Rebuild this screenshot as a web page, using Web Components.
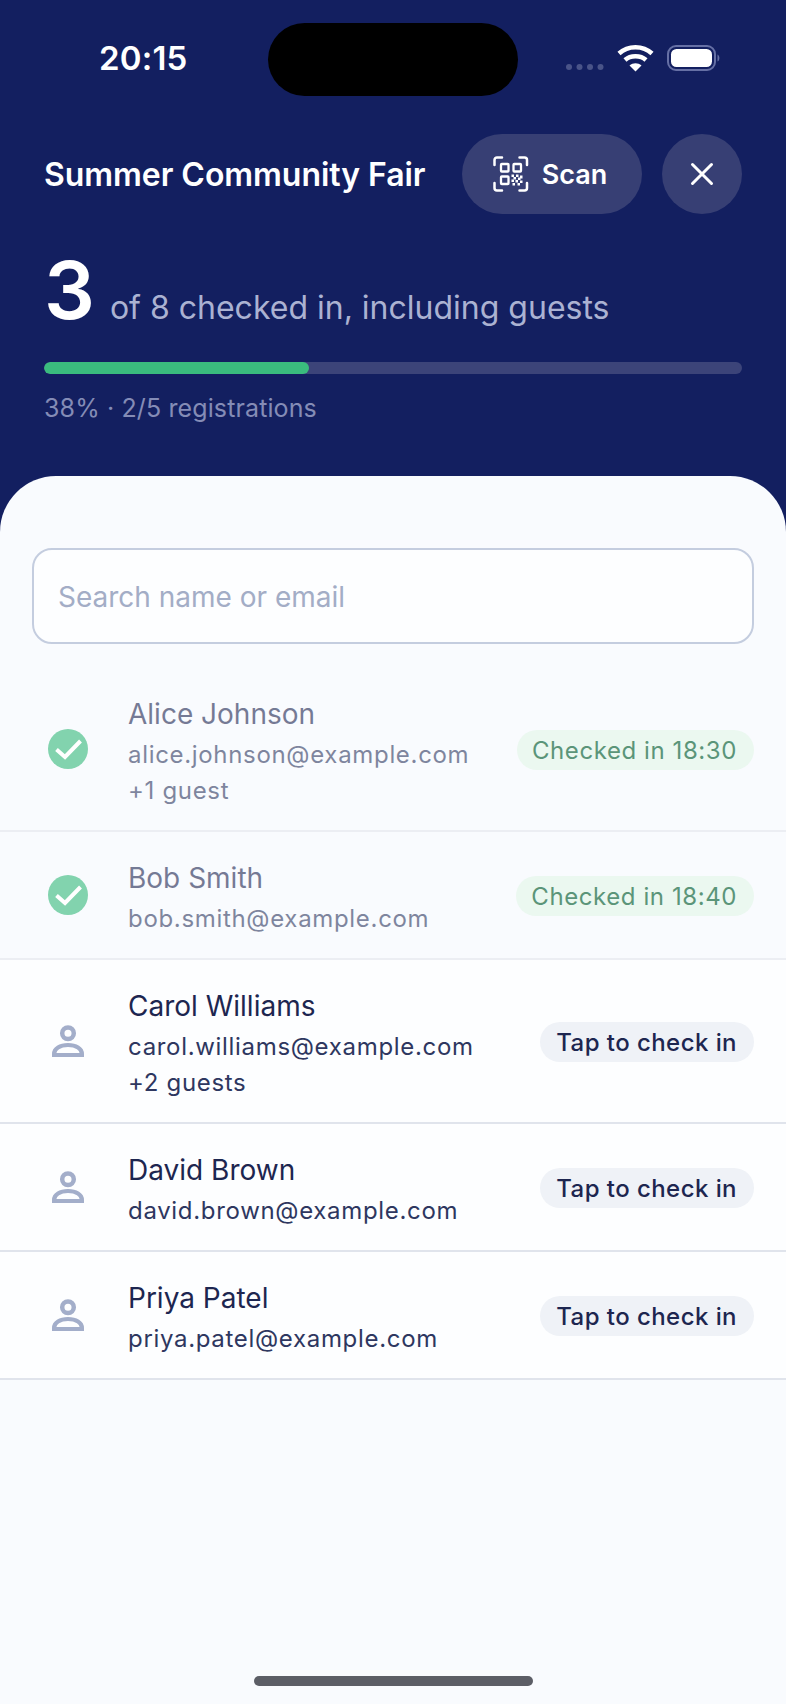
<!DOCTYPE html>
<html lang="en">
<head>
<meta charset="utf-8">
<title>Summer Community Fair</title>
<style>
  html, body { margin: 0; height: 100%; background: #131f60; }
  body { font-family: Inter, "Liberation Sans", sans-serif; }
  fair-screen { height: 1704px; }
</style>
</head>
<body>
<fair-screen>
  <status-bar slot="top" time="20:15"></status-bar>
  <fair-header slot="top" title="Summer Community Fair" count="3" total="of 8 checked in, including guests" percent="38" note="38% · 2/5 registrations"></fair-header>
  <search-box placeholder="Search name or email"></search-box>
  <guest-row name="Alice Johnson" email="alice.johnson@example.com" extra="+1 guest" checked="18:30"></guest-row>
  <guest-row name="Bob Smith" email="bob.smith@example.com" checked="18:40"></guest-row>
  <guest-row name="Carol Williams" email="carol.williams@example.com" extra="+2 guests"></guest-row>
  <guest-row name="David Brown" email="david.brown@example.com"></guest-row>
  <guest-row name="Priya Patel" email="priya.patel@example.com"></guest-row>
</fair-screen>

<script>
class FairScreen extends HTMLElement {
  constructor() {
    super();
    this.attachShadow({ mode: "open" });
  }

  connectedCallback() {
    this.shadowRoot.innerHTML = /* html */`
    <style>
      :host { display: flex; flex-direction: column; background: #131f60; overflow: hidden; position: relative; }
      .sheet {
        flex: 1;
        background: #f9fbfe;
        border-radius: 56px 56px 0 0;
        padding-top: 72px;
      }
      .home {
        position: absolute;
        left: 254px;
        bottom: 18px;
        width: 279px;
        height: 10px;
        border-radius: 5px;
        background: #5c5e66;
      }
    </style>
    <slot name="top"></slot>
    <div class="sheet"><slot></slot></div>
    <div class="home"></div>
    `;
  }
}

class StatusBar extends HTMLElement {
  constructor() {
    super();
    this.attachShadow({ mode: "open" });
  }

  connectedCallback() {
    this.shadowRoot.innerHTML = /* html */`
    <style>
      :host { display: flex; align-items: flex-start; height: 134px; position: relative; color: #fff; }
      .time {
        margin: 36px 0 0 99px;
        font: 600 33px/44px Inter, "Liberation Sans", sans-serif;
        letter-spacing: 0.2px;
      }
      .island {
        position: absolute;
        left: 268px;
        top: 23px;
        width: 250px;
        height: 73px;
        border-radius: 37px;
        background: #000;
      }
      .icons { position: absolute; left: 564px; top: 44px; }
    </style>
    <span class="time">${this.getAttribute("time")}</span>
    <div class="island"></div>
    <svg class="icons" width="160" height="32" viewBox="0 0 160 32">
      <g fill="#4a5488">
        <circle cx="5" cy="23" r="3"/><circle cx="15.500" cy="23" r="3"/>
        <circle cx="26" cy="23" r="3"/><circle cx="36.500" cy="23" r="3"/>
      </g>
      <g fill="none" stroke="#fff" stroke-width="4.500">
        <path d="M55 9.500C64 1 79 1 88 9.500"/>
        <path d="M61 16C66.500 11 76.500 11 82 16"/>
      </g>
      <path d="M65.500 21.500C69 18.500 74 18.500 77.500 21.500L71.500 27.500Z" fill="#fff"/>
      <rect x="104" y="2" width="47" height="24" rx="8" fill="none" stroke="#6670a5" stroke-width="2"/>
      <rect x="107" y="5" width="41" height="18" rx="5.500" fill="#fff"/>
      <path d="M153.500 10.500C156 11.500 156 16.500 153.500 17.500Z" fill="#6670a5"/>
    </svg>
    `;
  }
}

class FairHeader extends HTMLElement {
  constructor() {
    super();
    this.attachShadow({ mode: "open" });
  }

  connectedCallback() {
    const percent = this.getAttribute("percent");
    this.shadowRoot.innerHTML = /* html */`
    <style>
      :host { display: block; height: 342px; padding: 0 44px; color: #fff; box-sizing: border-box; }
      .top { display: flex; align-items: center; height: 80px; }
      h1 { flex: 1; margin: 0; font-size: 32px; font-weight: 600; letter-spacing: -0.05px; white-space: nowrap; }
      .btn {
        display: flex;
        align-items: center;
        justify-content: center;
        height: 80px;
        border-radius: 40px;
        background: #373f74;
      }
      .scan { box-sizing: border-box; width: 180px; padding-right: 4px; gap: 13px; font-size: 27px; font-weight: 600; margin-right: 20px; }
      .close { width: 80px; }
      .stat { display: flex; align-items: baseline; margin-top: 34px; height: 84px; }
      .count { font-size: 80px; font-weight: 600; line-height: 84px; margin-right: 15px; }
      .total { font-size: 32px; color: #abb2d2; }
      .bar { height: 12px; margin-top: 30px; border-radius: 6px; background: #3c4479; overflow: hidden; }
      .fill { height: 100%; width: ${percent}%; border-radius: 6px; background: #3abc7e; }
      .note { margin-top: 18px; font-size: 25px; line-height: 32px; color: #848cb6; letter-spacing: 0.12px; }
    </style>
    <div class="top">
      <h1>${this.getAttribute("title")}</h1>
      <div class="btn scan">
        <svg width="36" height="36" viewBox="0 0 36 36" fill="none" stroke="#fff" stroke-width="2.500" stroke-linecap="round" stroke-linejoin="round">
          <path d="M1.500 9V4a2.500 2.500 0 0 1 2.500-2.500h5M26.500 1.500h5A2.500 2.500 0 0 1 34 4v5M34 27v5a2.500 2.500 0 0 1-2.500 2.500h-5M9 34.500H4A2.500 2.500 0 0 1 1.500 32v-5"/>
          <g stroke-width="2.300">
            <rect x="8" y="8" width="7.500" height="7.500" rx="0.800"/>
            <rect x="20.500" y="8" width="7.500" height="7.500" rx="0.800"/>
            <rect x="8" y="20.500" width="7.500" height="7.500" rx="0.800"/>
          </g>
          <g fill="#fff" stroke="none">
            <rect x="18.500" y="18.500" width="2.500" height="2.500"/>
            <rect x="23" y="18.500" width="2.500" height="2.500"/>
            <rect x="27" y="19.500" width="2.500" height="3"/>
            <rect x="20.500" y="21" width="2.500" height="2.500"/>
            <rect x="25" y="21.500" width="2.500" height="2.500"/>
            <rect x="18.500" y="23.500" width="2.500" height="2.500"/>
            <rect x="22.500" y="24" width="2.500" height="2.500"/>
            <rect x="27" y="24.500" width="2.500" height="2.500"/>
            <rect x="19.500" y="27" width="2.500" height="2.500"/>
            <rect x="24.500" y="27" width="2.500" height="2.500"/>
          </g>
        </svg>
        <span>Scan</span>
      </div>
      <div class="btn close">
        <svg width="24" height="24" viewBox="0 0 24 24" fill="none" stroke="#fff" stroke-width="3" stroke-linecap="round">
          <path d="M2.500 2.500l19 19M21.500 2.500l-19 19"/>
        </svg>
      </div>
    </div>
    <div class="stat">
      <span class="count">${this.getAttribute("count")}</span>
      <span class="total">${this.getAttribute("total")}</span>
    </div>
    <div class="bar"><div class="fill"></div></div>
    <div class="note">${this.getAttribute("note")}</div>
    `;
  }
}

class SearchBox extends HTMLElement {
  constructor() {
    super();
    this.attachShadow({ mode: "open" });
  }

  connectedCallback() {
    this.shadowRoot.innerHTML = /* html */`
    <style>
      :host { display: block; margin: 0 32px 24px; }
      .field {
        display: flex;
        align-items: center;
        box-sizing: border-box;
        height: 96px;
        padding: 1px 24px 0;
        border: 2px solid #c4cddf;
        border-radius: 20px;
        background: #fdfeff;
        font-size: 28px;
        color: #a3adc6;
      }
    </style>
    <div class="field">${this.getAttribute("placeholder")}</div>
    `;
  }
}

class GuestRow extends HTMLElement {
  constructor() {
    super();
    this.attachShadow({ mode: "open" });
  }

  connectedCallback() {
    const checked = this.getAttribute("checked");
    const extra = this.getAttribute("extra");
    const icon = checked
      ? /* html */`<svg width="40" height="40" viewBox="0 0 40 40">
          <circle cx="20" cy="20" r="20" fill="#82d3ae"/>
          <path d="M8.500 20.500L17 28L32.500 12" fill="none" stroke="#fff" stroke-width="4"/>
        </svg>`
      : /* html */`<svg width="32" height="32" viewBox="0 0 32 32" fill="none" stroke="#a3aeca" stroke-width="4">
          <circle cx="16" cy="8.300" r="5.800" stroke-width="4.500"/>
          <path d="M2 30v-1C2 23.500 8 20 16 20s14 3.500 14 9v1Z" stroke-linejoin="miter"/>
        </svg>`;
    this.shadowRoot.innerHTML = /* html */`
    <style>
      :host { display: flex; align-items: center; box-sizing: border-box; padding: 0 32px; border-bottom: 2px solid ${checked ? "#eceef3" : "#e0e4ec"}; background: ${checked ? "#f9fbfe" : "#fdfeff"}; }
      .icon { flex: none; width: 72px; display: flex; justify-content: center; margin-right: 24px; }
      .text { flex: 1; min-width: 0; padding: 25px 0 21px; opacity: ${checked ? 0.6 : 1}; }
      .name { font-size: 28px; line-height: 42px; color: #1d2650; }
      .email, .extra { font-size: 24px; line-height: 36px; color: #2e3760; letter-spacing: 0.68px; }
      .email { margin-top: 2px; }
      .pill {
        flex: none;
        display: flex;
        align-items: center;
        height: 40px;
        margin-top: 2px;
        padding: 0 17px 0 16px;
        border-radius: 20px;
        font-size: 24px;
        font-weight: 500;
        letter-spacing: 0.44px;
        background: #eff2f7;
        color: #1d2650;
      }
      .done { padding-left: 15px; font-weight: 400; letter-spacing: 0.58px; background: #ebf8f0; color: #5b9579; }
    </style>
    <div class="icon">${icon}</div>
    <div class="text">
      <div class="name">${this.getAttribute("name")}</div>
      <div class="email">${this.getAttribute("email")}</div>
      ${extra ? `<div class="extra">${extra}</div>` : ""}
    </div>
    <div class="pill ${checked ? "done" : ""}">${checked ? `Checked in ${checked}` : "Tap to check in"}</div>
    `;
  }
}

customElements.define("fair-screen", FairScreen);
customElements.define("status-bar", StatusBar);
customElements.define("fair-header", FairHeader);
customElements.define("search-box", SearchBox);
customElements.define("guest-row", GuestRow);
</script>
</body>
</html>
